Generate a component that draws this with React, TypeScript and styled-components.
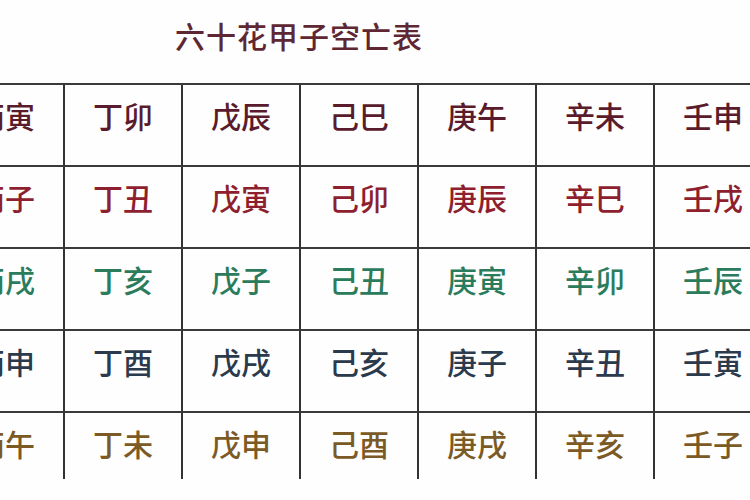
import React from "react"
import styled, { createGlobalStyle } from "styled-components"

const GlobalStyle = createGlobalStyle`
	html, body {
		margin: 0;
		padding: 0;
		background: #fff;
		overflow: hidden;
	}
	body {
		font-family: "Noto Sans CJK SC", "Noto Sans", sans-serif;
	}
`

const Page = styled.div`
	width: 750px;
	height: 500px;
	overflow: hidden;
	background: #fefefe;
`

const Title = styled.h1`
	margin: 0;
	padding: 18px 0 0 175px;
	height: 83px;
	box-sizing: border-box;
	font-size: 30px;
	line-height: 34px;
	font-weight: 500;
	letter-spacing: 1px;
	color: #5e2733;
`

const Table = styled.div`
	display: grid;
	grid-template-columns: repeat(7, 118px);
	grid-auto-rows: 82px;
	margin-left: -53px;
	border-top: 2px solid #3a3a3a;
	width: max-content;
`

const Cell = styled.div<{ $color: string; $last?: boolean }>`
	display: flex;
	align-items: flex-start;
	justify-content: center;
	box-sizing: border-box;
	padding-top: 15px;
	border-right: 2px solid #333;
	border-bottom: ${(p) => (p.$last ? "none" : "2px solid #3a3a3a")};
	height: ${(p) => (p.$last ? "66px" : "auto")};
	font-size: 30px;
	line-height: 30px;
	font-weight: 500;
	color: ${(p) => p.$color};
`

const rows: { color: string; cells: string[] }[] = [
	{ color: "#5a1b2c", cells: ["丙寅", "丁卯", "戊辰", "己巳", "庚午", "辛未", "壬申"] },
	{ color: "#8e1f2e", cells: ["丙子", "丁丑", "戊寅", "己卯", "庚辰", "辛巳", "壬戌"] },
	{ color: "#2b7c5c", cells: ["丙戌", "丁亥", "戊子", "己丑", "庚寅", "辛卯", "壬辰"] },
	{ color: "#2b3a4c", cells: ["丙申", "丁酉", "戊戌", "己亥", "庚子", "辛丑", "壬寅"] },
	{ color: "#7c5a26", cells: ["丙午", "丁未", "戊申", "己酉", "庚戌", "辛亥", "壬子"] },
]

export default function App() {
	return (
		<Page>
			<GlobalStyle />
			<Title>六十花甲子空亡表</Title>
			<Table>
				{rows.map((row, r) =>
					row.cells.map((text, c) => (
						<Cell key={`${r}-${c}`} $color={row.color} $last={r === rows.length - 1}>
							{text}
						</Cell>
					))
				)}
			</Table>
		</Page>
	)
}
